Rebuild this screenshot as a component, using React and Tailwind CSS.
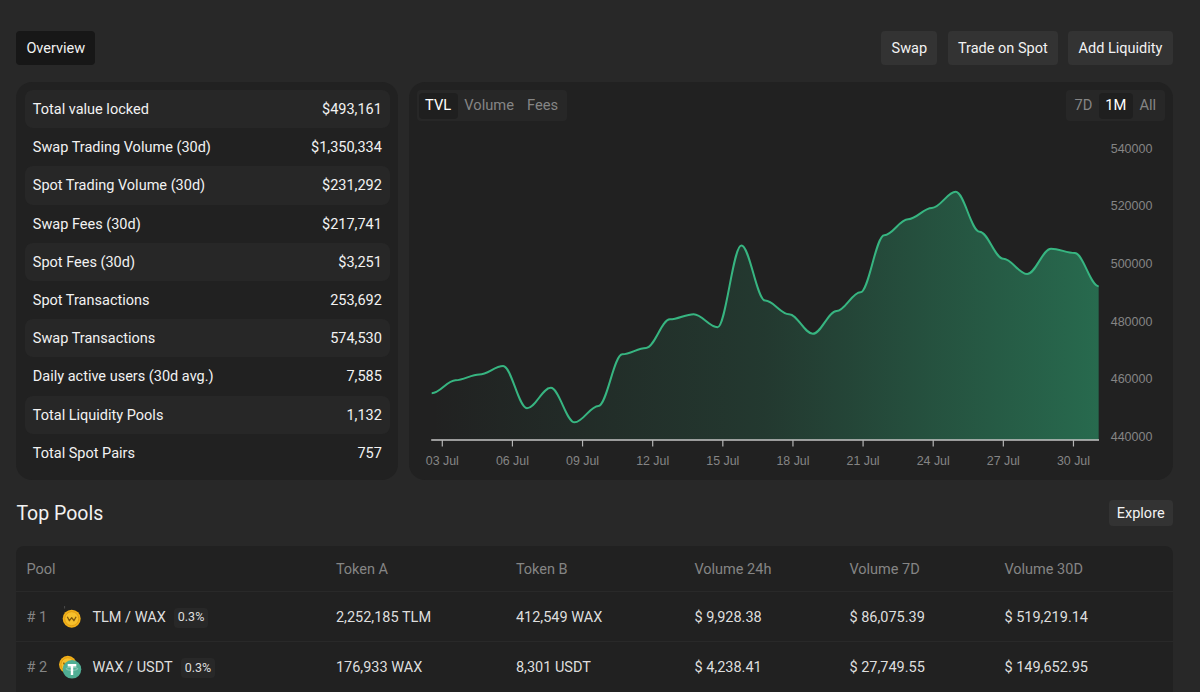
import { useState } from 'react';
import clsx from 'clsx';

const stats = [
  { label: 'Total value locked', value: '$493,161' },
  { label: 'Swap Trading Volume (30d)', value: '$1,350,334' },
  { label: 'Spot Trading Volume (30d)', value: '$231,292' },
  { label: 'Swap Fees (30d)', value: '$217,741' },
  { label: 'Spot Fees (30d)', value: '$3,251' },
  { label: 'Spot Transactions', value: '253,692' },
  { label: 'Swap Transactions', value: '574,530' },
  { label: 'Daily active users (30d avg.)', value: '7,585' },
  { label: 'Total Liquidity Pools', value: '1,132' },
  { label: 'Total Spot Pairs', value: '757' },
];

const pools = [
  { rank: 1, pair: 'TLM / WAX', fee: '0.3%', tokenA: '2,252,185 TLM', tokenB: '412,549 WAX', day: '$ 9,928.38', week: '$ 86,075.39', month: '$ 519,219.14' },
  { rank: 2, pair: 'WAX / USDT', fee: '0.3%', tokenA: '176,933 WAX', tokenB: '8,301 USDT', day: '$ 4,238.41', week: '$ 27,749.55', month: '$ 149,652.95' },
];

const tvl = [
  455000, 459500, 461500, 464400, 449800, 456900, 444900, 450600, 468500, 470700,
  480600, 482400, 477900, 506200, 487100, 482400, 475600, 483500, 490000, 509800,
  515300, 519200, 524800, 511000, 501600, 496300, 505100, 503600, 492100,
];

const ticks = ['03 Jul', '06 Jul', '09 Jul', '12 Jul', '15 Jul', '18 Jul', '21 Jul', '24 Jul', '27 Jul', '30 Jul'];
const levels = [540000, 520000, 500000, 480000, 460000, 440000];

const CHART = { left: 22.7, right: 690, base: 319, step: 23.82 };

const scaleY = (value) => 315.5 - ((value - 440000) / 20000) * 57.7;

const buildLine = () => {
  const points = tvl.map((value, i) => [CHART.left + i * CHART.step, scaleY(value)]);
  const bend = CHART.step * 0.35;
  return points.reduce((path, [x, y], i) => {
    if (i === 0) return `M${x} ${y}`;
    const [px, py] = points[i - 1];
    return `${path} C${px + bend} ${py} ${x - bend} ${y} ${x} ${y}`;
  }, '');
};

const TvlChart = () => {
  const line = buildLine();

  return (
    <svg viewBox="0 0 764 358" className="block w-[764px] h-[358px]">
      <defs>
        <linearGradient id="tvlFill" x1="0" y1="0" x2="1" y2="0">
          <stop offset="0" stopColor="#2eb67d" stopOpacity="0" />
          <stop offset="0.5" stopColor="#2eb67d" stopOpacity="0.16" />
          <stop offset="1" stopColor="#2eb67d" stopOpacity="0.49" />
        </linearGradient>
      </defs>
      <path d={`${line} V${CHART.base} H${CHART.left} Z`} fill="url(#tvlFill)" />
      <path d={line} fill="none" stroke="#37b581" strokeWidth="2" />

      {/* Axis */}
      <path d={`M${CHART.left - 0.5} ${CHART.base} H${CHART.right}`} stroke="#c4c4c4" strokeWidth="1.3" />
      <g fontFamily="'Liberation Sans', Arial, sans-serif" fill="#858585">
        {ticks.map((tick, i) => (
          <g key={tick}>
            <path d={`M${33.3 + i * 70.13} ${CHART.base} v6.5`} stroke="#b5b5b5" strokeWidth="1.2" />
            <text x={33.3 + i * 70.13} y="344" textAnchor="middle" fontSize="12.4">{tick}</text>
          </g>
        ))}
        {levels.map((level) => (
          <text key={level} x="701.7" y={scaleY(level) + 4.5} fontSize="12.5">{level}</text>
        ))}
      </g>
    </svg>
  );
};

const Toggle = ({ options, value, onChange }) => (
  <div className="flex h-[31px] items-center rounded bg-[#272727] px-[2px]">
    {options.map((option) => (
      <button
        key={option}
        onClick={() => onChange(option)}
        className={clsx(
          'h-[26px] rounded px-[6.5px] text-[14.7px] leading-none',
          value === option ? 'bg-[#1f1f1f] text-white' : 'text-[#858585]'
        )}
      >
        {option}
      </button>
    ))}
  </div>
);

const WaxCoin = () => (
  <>
    <circle cx="9" cy="9" r="9" fill="#f2b018" />
    <circle cx="9" cy="9" r="7" fill="#f7c02b" stroke="#dc9610" strokeWidth="0.8" />
    <path d="M4.6 7 L6.7 11 L9 8 L11.2 11 L13.4 7" fill="none" stroke="#7e570d" strokeWidth="1.3" strokeLinejoin="round" />
  </>
);

const PoolIcon = ({ rank }) => (
  <svg viewBox="0 0 24 26" className="h-[26px] w-6 shrink-0">
    {rank === 1 ? (
      <>
        <path d="M5.6 1 V3.5" stroke="#4a4a4a" strokeWidth="1" />
        <g transform="translate(3.7 4.7)"><WaxCoin /></g>
      </>
    ) : (
      <>
        <g transform="translate(0 0.8) scale(0.98)"><WaxCoin /></g>
        <circle cx="13" cy="14.3" r="9.3" fill="#50ae94" />
        <ellipse cx="13" cy="13.8" rx="5.8" ry="1.5" fill="none" stroke="#a9d8ca" strokeWidth="0.7" />
        <path d="M8.7 10.2 H17.3 M13 10.2 V20" stroke="#fff" strokeWidth="2.4" />
      </>
    )}
  </svg>
);

const columns = 'grid grid-cols-[309.5px_180px_178.5px_155px_155px_1fr] items-center pl-[10px]';

const App = () => {
  const [metric, setMetric] = useState('TVL');
  const [range, setRange] = useState('1M');

  return (
    <div className="h-[692px] overflow-hidden bg-[#282828] pl-[16.4px] pr-[27.4px] pt-[31px] font-['Roboto',sans-serif] text-[14.5px] text-[#f2f2f2]">
      <div className="flex h-[34px] justify-between">
        <button className="rounded bg-[#171717] px-[10px] pt-[2px]">Overview</button>
        <div className="flex gap-[10.5px]">
          {['Swap', 'Trade on Spot', 'Add Liquidity'].map((label) => (
            <button key={label} className="rounded bg-[#333333] px-[10.2px] pt-[2px]">{label}</button>
          ))}
        </div>
      </div>

      <div className="mt-[17px] flex h-[398px] justify-between">
        {/* Stats */}
        <div className="w-[381.5px] rounded-2xl bg-[#212121] pl-[8.4px] pr-2 pt-2">
          {stats.map((stat, i) => (
            <div
              key={stat.label}
              className={clsx('flex h-[38.2px] items-center justify-between rounded-lg px-2 pt-[1.6px]', i % 2 === 0 && 'bg-[#272727]')}
            >
              <span>{stat.label}</span>
              <span>{stat.value}</span>
            </div>
          ))}
        </div>

        {/* Chart */}
        <div className="w-[764px] rounded-2xl bg-[#212121] pt-2">
          <div className="flex justify-between px-2">
            <Toggle options={['TVL', 'Volume', 'Fees']} value={metric} onChange={setMetric} />
            <Toggle options={['7D', '1M', 'All']} value={range} onChange={setRange} />
          </div>
          <TvlChart />
        </div>
      </div>

      <div className="mt-5 flex h-[26px] items-center justify-between">
        <h2 className="pt-[2px] text-[19.5px] leading-none">Top Pools</h2>
        <button className="h-[26px] rounded bg-[#333333] px-2 pt-[2px]">Explore</button>
      </div>

      {/* Pools */}
      <div className="mt-5 h-[160px] rounded-t-lg bg-[#212121]">
        <div className={clsx(columns, 'h-[45px] pt-[2px] text-[#858585]')}>
          <span>Pool</span>
          <span>Token A</span>
          <span>Token B</span>
          <span>Volume 24h</span>
          <span>Volume 7D</span>
          <span>Volume 30D</span>
        </div>
        {pools.map((pool) => (
          <div key={pool.rank} className={clsx(columns, 'h-[50.3px] border-t border-[#292929] pt-[2px] text-[#dedede]')}>
            <div className="flex items-center">
              <span className="w-[32.6px] text-[#858585]"># {pool.rank}</span>
              <PoolIcon rank={pool.rank} />
              <span className="ml-[9.4px]">{pool.pair}</span>
              <span className="ml-[8.5px] flex h-5 items-center rounded bg-[#282828] px-[3.5px] text-[12.5px]">{pool.fee}</span>
            </div>
            <span>{pool.tokenA}</span>
            <span>{pool.tokenB}</span>
            <span>{pool.day}</span>
            <span>{pool.week}</span>
            <span>{pool.month}</span>
          </div>
        ))}
      </div>
    </div>
  );
};

export default App;
